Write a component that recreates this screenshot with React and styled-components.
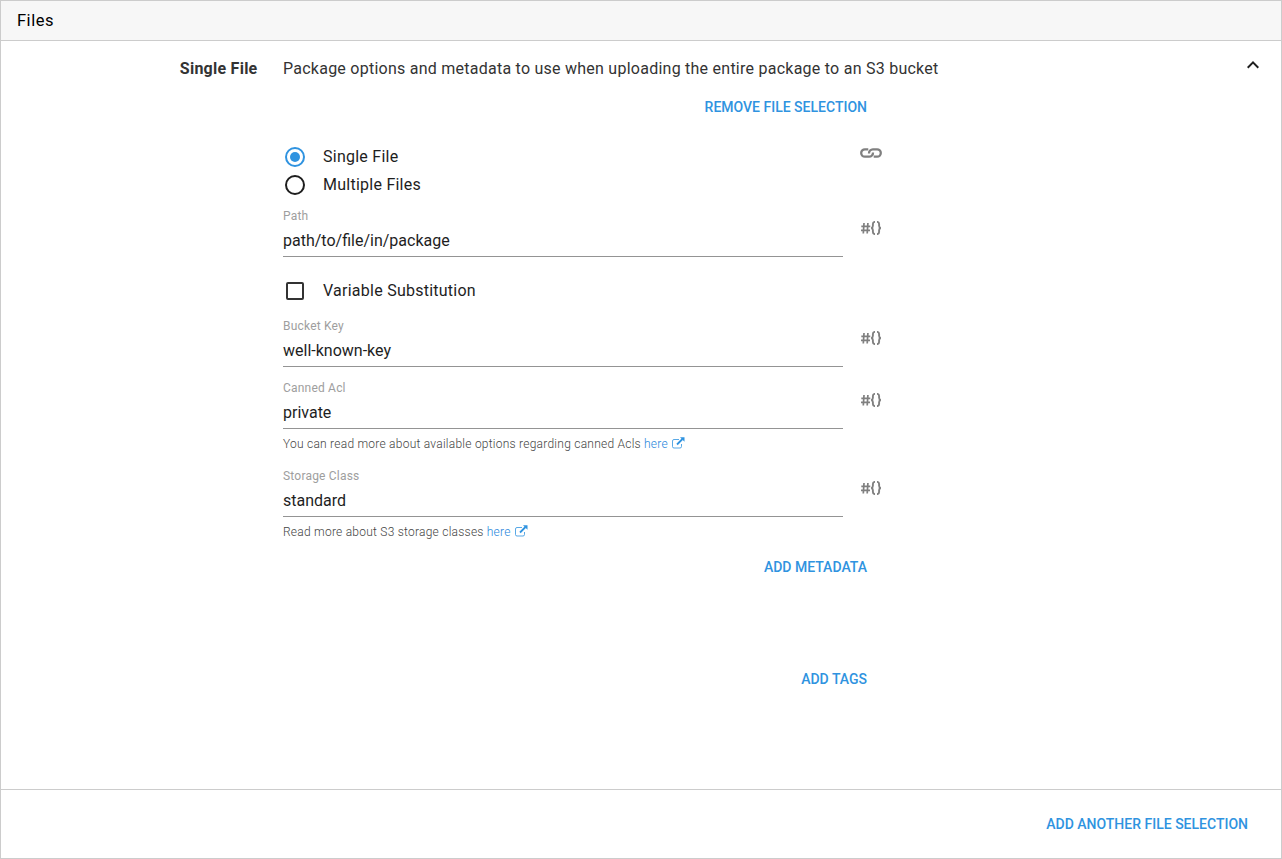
import React from "react";
import styled, { createGlobalStyle } from "styled-components";

const GlobalStyle = createGlobalStyle`
  *, *::before, *::after { box-sizing: border-box; }
  body { margin: 0; background: #fff; font-family: Roboto, sans-serif; color: #333; }
`;

const Panel = styled.main`
  display: flex;
  flex-direction: column;
  width: 1282px;
  height: 859px;
  border: 1px solid #ccc;
`;

const Header = styled.header`
  flex: none;
  height: 40px;
  padding: 8px 16px 0;
  border-bottom: 1px solid #ccc;
  background: #f7f7f7;
  color: #000;
  font-size: 16.5px;
  line-height: 24px;
  letter-spacing: 0.5px;
`;

const Section = styled.section`
  flex: 1;
  display: flex;
  padding-top: 16px;
`;

const SectionLabel = styled.div`
  flex: none;
  width: 256.5px;
  text-align: right;
  font-size: 16px;
  font-weight: 700;
  line-height: 24px;
  letter-spacing: 0.25px;
`;

const Content = styled.div`
  flex: 1;
  padding-left: 25.5px;
`;

const Summary = styled.div`
  display: flex;
  justify-content: space-between;
  height: 32px;
  font-size: 16px;
  line-height: 24px;
  letter-spacing: 0.248px;
`;

const CollapseButton = styled.button`
  width: 24px;
  height: 24px;
  margin: -4px 16px 0 0;
  padding: 0;
  border: 0;
  background: none;
  svg { display: block; }
`;

const Actions = styled.div`
  width: 600px;
  height: ${(p) => p.$height || "36px"};
  display: flex;
  justify-content: flex-end;
  align-items: flex-start;
`;

const TextButton = styled.button`
  height: 36px;
  padding: 0 16px;
  border: 0;
  background: none;
  color: #2f93e0;
  font: 500 14px/36px Roboto, sans-serif;
  text-transform: uppercase;
`;

const FormRow = styled.div`
  display: flex;
  width: 600px;
  margin-top: ${(p) => p.$top || 0}px;
`;

const Control = styled.div`
  flex: none;
  width: 560px;
`;

const Aside = styled.div`
  width: 39px;
  display: flex;
  justify-content: flex-end;
  padding-top: ${(p) => p.$top}px;
  svg { display: block; }
`;

const Choice = styled.label`
  display: flex;
  align-items: center;
  height: 28px;
  padding-left: 2px;
  gap: 18px;
  color: #1e1e1e;
  font-size: 16px;
  letter-spacing: 0.25px;
`;

const Radio = styled.span`
  display: grid;
  place-items: center;
  width: 20px;
  height: 20px;
  margin-top: 2px;
  border: 2px solid ${(p) => (p.$on ? "#2f93e0" : "#1e1e1e")};
  border-radius: 50%;
  &::after {
    content: "";
    width: 10px;
    height: 10px;
    border-radius: 50%;
    background: ${(p) => (p.$on ? "#2f93e0" : "transparent")};
  }
`;

const Checkbox = styled.span`
  width: 18px;
  height: 18px;
  margin: 2px 1px 0;
  border: 2px solid #333;
  border-radius: 2px;
`;

const FieldLabel = styled.div`
  height: 18px;
  color: #9e9e9e;
  font-size: 12px;
  line-height: 18px;
  letter-spacing: 0.2px;
`;

const Input = styled.div`
  height: 32px;
  border-bottom: 1px solid #949494;
  color: #1e1e1e;
  font-size: 16px;
  line-height: 31px;
`;

const Hint = styled.div`
  display: flex;
  align-items: center;
  height: 18px;
  margin-top: 6px;
  color: #444;
  font-size: 12px;
  font-weight: 300;
  line-height: 18px;
  letter-spacing: 0.24px;
`;

const HintLink = styled.a`
  display: flex;
  align-items: center;
  gap: 4px;
  margin-left: 3px;
  color: #1f86dc;
  svg { margin-bottom: 2px; }
`;

const Footer = styled.footer`
  flex: none;
  height: 69px;
  padding: 16px 17px 0 0;
  display: flex;
  justify-content: flex-end;
  border-top: 1px solid #ccc;
`;

const LinkIcon = () => (
  <svg width="22" height="10" viewBox="0 0 22 10" fill="none" stroke="#808080" strokeWidth="2.3">
    <path d="M8.300 1.300H4.900a3.700 3.700 0 0 0 0 7.400H9A3.900 3.900 0 0 0 13 4.500" />
    <path d="M13.700 8.700h3.400a3.700 3.700 0 0 0 0-7.400H13A3.900 3.900 0 0 0 9 5.500" />
  </svg>
);

const BindIcon = () => (
  <svg width="21" height="14" viewBox="0 0 21 14" fill="none" stroke="#808080" strokeWidth="1.7">
    <path d="M3 2 2.300 12.500M6.900 2 6.200 12.500M.3 5.400h9M0 9.400h9" />
    <path d="M14 .9c-1.600 0-2.100.8-2.100 2v1.800c0 1.300-.5 2.100-1.700 2.300 1.200.2 1.700 1 1.700 2.300v1.800c0 1.200.5 2 2.100 2" strokeWidth="1.900" />
    <path d="M16 .9c1.600 0 2.100.8 2.100 2v1.800c0 1.300.5 2.100 1.700 2.300-1.200.2-1.700 1-1.700 2.300v1.800c0 1.200-.5 2-2.100 2" strokeWidth="1.900" />
  </svg>
);

const ExternalIcon = () => (
  <svg width="13" height="12" viewBox="0 0 13 12" fill="none" stroke="#2f93e0">
    <path d="M7 2.500H2A1.500 1.500 0 0 0 .5 4v5.500A1.500 1.500 0 0 0 2 11h6a1.500 1.500 0 0 0 1.500-1.500V7" strokeOpacity="0.8" />
    <path d="M5 7.500 10.500 2" strokeWidth="1.800" />
    <path d="M8 .3h4.500v4.500z" fill="#2f93e0" stroke="none" />
  </svg>
);

const ChevronUp = () => (
  <svg width="24" height="24" viewBox="0 0 24 24" fill="#1e1e1e">
    <path d="M12 8l-6 6 1.410 1.410L12 10.830l4.590 4.580L18 14z" />
  </svg>
);

function Field({ label, value, hint, top }) {
  return (
    <FormRow $top={top}>
      <Control>
        <FieldLabel>{label}</FieldLabel>
        <Input>{value}</Input>
        {hint && (
          <Hint>
            {hint}
            <HintLink>here <ExternalIcon /></HintLink>
          </Hint>
        )}
      </Control>
      <Aside $top={14}><BindIcon /></Aside>
    </FormRow>
  );
}

export default function App() {
  return (
    <>
      <GlobalStyle />
      <Panel>
        <Header>Files</Header>
        <Section>
          <SectionLabel>Single File</SectionLabel>
          <Content>
            <Summary>
              <span>Package options and metadata to use when uploading the entire package to an S3 bucket</span>
              <CollapseButton aria-label="Collapse"><ChevronUp /></CollapseButton>
            </Summary>
            <Actions $height="53px"><TextButton>Remove file selection</TextButton></Actions>
            <FormRow>
              <Control>
                <Choice><Radio $on />Single File</Choice>
                <Choice><Radio />Multiple Files</Choice>
              </Control>
              <Aside $top={6}><LinkIcon /></Aside>
            </FormRow>
            <Field label="Path" value="path/to/file/in/package" top={9} />
            <FormRow $top={19}>
              <Choice><Checkbox />Variable Substitution</Choice>
            </FormRow>
            <Field label="Bucket Key" value="well-known-key" top={13} />
            <Field label="Canned Acl" value="private" top={12} hint="You can read more about available options regarding canned Acls" />
            <Field label="Storage Class" value="standard" top={14} hint="Read more about S3 storage classes" />
            <FormRow $top={8}><Actions $height="112px"><TextButton>Add metadata</TextButton></Actions></FormRow>
            <Actions><TextButton>Add tags</TextButton></Actions>
          </Content>
        </Section>
        <Footer><TextButton>Add another file selection</TextButton></Footer>
      </Panel>
    </>
  );
}
